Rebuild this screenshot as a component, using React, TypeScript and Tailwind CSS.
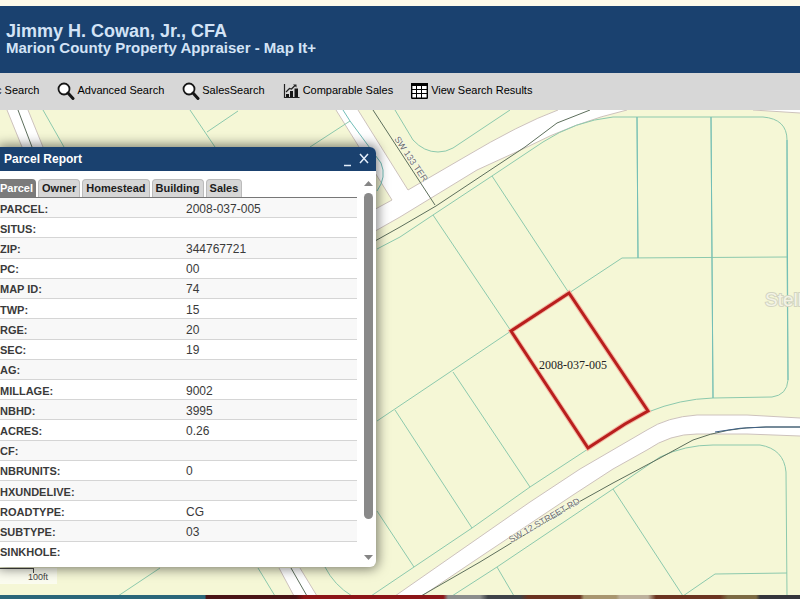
import React from "react";

const rows: [string, string][] = [
  ["PARCEL:", "2008-037-005"],
  ["SITUS:", ""],
  ["ZIP:", "344767721"],
  ["PC:", "00"],
  ["MAP ID:", "74"],
  ["TWP:", "15"],
  ["RGE:", "20"],
  ["SEC:", "19"],
  ["AG:", ""],
  ["MILLAGE:", "9002"],
  ["NBHD:", "3995"],
  ["ACRES:", "0.26"],
  ["CF:", ""],
  ["NBRUNITS:", "0"],
  ["HXUNDELIVE:", ""],
  ["ROADTYPE:", "CG"],
  ["SUBTYPE:", "03"],
  ["SINKHOLE:", ""],
];

const tabs = ["Parcel", "Owner", "Homestead", "Building", "Sales"];

function SearchIcon() {
  return (
    <svg viewBox="0 0 18 18" className="size-[18px] shrink-0" aria-hidden="true">
      <circle cx="7" cy="7" r="5.500" fill="#fff" stroke="#161616" strokeWidth="1.800" />
      <path d="M11 11l5 5.500" stroke="#161616" strokeWidth="3" strokeLinecap="round" />
    </svg>
  );
}

function ChartIcon() {
  return (
    <svg viewBox="0 0 17 16" className="h-4 w-[17px] shrink-0" aria-hidden="true">
      <path d="M1.500 1v13.500H16.500" fill="none" stroke="#222" strokeWidth="1.200" />
      <path d="M3 11h3v3H3zM7 8h3v6H7zM11.500 5.500h3.500v8.500h-3.500z" fill="#161616" />
      <path d="M3 9l3.500-3.500 2 .5 3.500-3.500" fill="none" stroke="#222" strokeWidth="1.200" />
      <path d="M10 1.500h3.500v3z" fill="#222" />
    </svg>
  );
}

function GridIcon() {
  return (
    <svg viewBox="0 0 17 16" className="h-4 w-[17px] shrink-0" aria-hidden="true">
      <rect x="0.700" y="0.700" width="15.600" height="14.600" rx="0.500" fill="#fff" stroke="#000" strokeWidth="1.400" />
      <path d="M0 0h17v3H0z" fill="#000" />
      <path d="M1 6.500h15M1 10.500h15M5.500 3v12M10.500 3v12" stroke="#000" strokeWidth="1" />
    </svg>
  );
}

function ParcelMap() {
  return (
    <svg
      viewBox="0 110 800 485"
      preserveAspectRatio="xMinYMin slice"
      className="absolute inset-0 h-full w-full bg-[#f5f7d6]"
      role="img"
      aria-label="Parcel map"
    >
      <g fill="#fff">
        <path d="M336 110L392 200L370 212V234L400 217L477 170L525 148Q575 122 627 110H558Q520 124 463 158L408 190L358 110Z" />
        <path d="M7 110L22 147H43L28 110Z" />
        <path d="M279 568L294 596H317L300 568Z" />
        <path d="M753 110L800 113V110Z" />
        <path d="M395 596L530 502L580 469L647 430Q667 417 697 415H747L800 418V436L747 434H697Q670 434 647 450L613 469L573 495L480 557L422 596Z" />
      </g>
      <g fill="none" stroke="#cdc2bd" strokeWidth="1">
        <path d="M336 110L392 200L370 212M370 234L400 217L477 170L525 148Q575 122 627 110M558 110Q520 124 463 158L408 190L358 110" />
        <path d="M7 110L22 147M28 110L43 147M279 568L294 596M300 568L317 596M753 110L800 113" />
        <path d="M395 596L530 502L580 469L647 430Q667 417 697 415H747L800 418M800 436L747 434H697Q670 434 647 450L613 469L573 495L480 557L422 596" />
      </g>
      <g fill="none" stroke="#8cc9ad" strokeWidth="1">
        <path d="M377 249L400 237L433 215L492 176L543 142Q575 121 613 117H763Q787 119 787 140V257L788 380Q787 395 772 397L713 398Q680 399 648 412" />
        <path d="M395 110L413 140Q424 152 438 152Q446 152 453 148L480 130L510 110" />
        <path d="M190 110L215 147M207 132L238 111M350 121L310 147M43 110L64 147" />
        <path d="M492 176L569 293L622 258L787 257M433 215L511 331L377 421" />
        <path d="M637 117L638 258M711 117L713 398" />
        <path d="M453 372L530 487M395 410L472 528M377 511L414 567M588 449L530 487L472 528L414 567L371 596" />
        <path d="M660 457Q685 445 713 445H760Q784 449 786 472L787 596M660 457L613 489L497 567L452 596M613 489L683 596L715 574L787 573M497 567L514 596" />
        <path d="M118 596L160 568M258 568L275 596M325 567Q334 585 352 596" />
      </g>
      <path d="M637 117L638 258M711 117L713 398M787 140L788 380M343 110L350 121L381 163Q387 177 377 191" fill="none" stroke="#72beb8" />
      <g fill="none" stroke="#5d6f5c" strokeWidth="1">
        <path d="M590 110L557 123L525 147L436 206L400 227L375 241M373 110L435 205M18 110L32 147M291 568L307 596" />
        <path d="M800 427L766 427Q727 427 693 440L660 458L613 483L577 503L480 562L421 596" />
      </g>
      <path d="M800 427L766 427Q740 427 715 432" fill="none" stroke="#3e5f86" />
      <path d="M569 293L648 411L625 424L588 448L511 331Z" fill="none" stroke="#f3b9a4" strokeWidth="5" />
      <path d="M569 293L648 411L625 424L588 448L511 331Z" fill="none" stroke="#b91f1d" strokeWidth="3" />
      <text x="539" y="369" className="font-['Liberation_Serif',serif] text-[12px]" fill="#222">2008-037-005</text>
      <g className="font-['Liberation_Sans',Arial,sans-serif] text-[9px]" fill="#6d6d6d" stroke="#fbfcf0" strokeWidth="1" paintOrder="stroke">
        <text transform="translate(394 139) rotate(56)">SW 133 TER</text>
        <text transform="translate(511 543) rotate(-30)">SW 12 STREET RD</text>
      </g>
      <text x="765" y="306" className="font-['Liberation_Sans',Arial,sans-serif] text-[19px]" fill="#f3f3e6" stroke="#d2d4c0" strokeWidth="2" paintOrder="stroke">Stell</text>
    </svg>
  );
}

function ParcelReport() {
  return (
    <section className="absolute top-[37px] left-0 flex w-[376px] flex-col overflow-hidden rounded-r-md bg-white shadow-[0_0_12px_2px_rgba(0,0,0,0.5)]">
      <header className="flex h-6 items-center bg-[#1a416f] pr-[7px] pl-1 text-white">
        <h2 className="flex-1 text-[12px] font-bold">Parcel Report</h2>
        <button type="button" aria-label="Minimize" className="flex h-6 w-4 items-center">
          <svg viewBox="0 0 16 24" className="h-6 w-4" aria-hidden="true">
            <path d="M1 18.500h7" stroke="#e4eefa" strokeWidth="1.500" />
          </svg>
        </button>
        <button type="button" aria-label="Close" className="flex h-6 w-[10px] items-center">
          <svg viewBox="0 0 10 24" className="h-6 w-[10px]" aria-hidden="true">
            <path d="M1 7l8 9M9 7l-8 9" stroke="#e4eefa" strokeWidth="1.500" />
          </svg>
        </button>
      </header>
      <div className="flex h-[396px] justify-between pt-2">
        <div className="w-[357px]">
          <div role="tablist" className="flex h-[19px] gap-[2px] border-b border-[#777]">
            {tabs.map((tab, i) => (
              <button
                key={tab}
                type="button"
                role="tab"
                aria-selected={i === 0}
                className={
                  i === 0
                    ? "rounded-tr-sm bg-[#7b7b7b] pr-[3px] text-[11px] font-bold text-white"
                    : "rounded-t-sm border border-b-0 border-[#bbb] bg-[#d6d6d6] px-[3px] text-[11px] font-bold text-[#1c1c1c]"
                }
              >
                {tab}
              </button>
            ))}
          </div>
          <table className="h-[363px] w-full border-collapse text-[#3a3a3a]">
            <tbody>
              {rows.map(([label, value]) => (
                <tr key={label} className="border-b border-[#d5d5d5] odd:bg-[#f8f8f8] last:border-0">
                  <th scope="row" className="w-[186px] p-0 pt-[2px] text-left text-[11px] leading-4 font-bold">{label}</th>
                  <td className="p-0 pt-[2px] text-[12px] leading-4">{value}</td>
                </tr>
              ))}
            </tbody>
          </table>
        </div>
        <div className="mr-[3px] flex w-[9px] flex-col items-center pt-[2px] pb-[7px]" aria-hidden="true">
          <svg viewBox="0 0 9 5" className="h-[5px] w-[9px]"><path d="M0 5L4.500 0L9 5z" fill="#858585" /></svg>
          <div className="mt-[7px] h-[326px] w-[9px] rounded-full bg-[#898989]" />
          <svg viewBox="0 0 9 5" className="mt-auto h-[5px] w-[9px]"><path d="M0 0L4.500 5L9 0z" fill="#858585" /></svg>
        </div>
      </div>
    </section>
  );
}

export default function App() {
  return (
    <div className="flex h-screen min-h-[599px] flex-col overflow-hidden bg-[#fdf9ea] pt-[6px] font-['Liberation_Sans',Arial,sans-serif]">
      <header className="flex h-[67px] shrink-0 flex-col justify-center bg-[#1a416f] pb-[2px] pl-[6px] font-bold text-[#d3e3f6]">
        <h1 className="text-[18px] leading-[18px]">Jimmy H. Cowan, Jr., CFA</h1>
        <p className="text-[15px] leading-4">Marion County Property Appraiser - Map It+</p>
      </header>
      <nav className="flex h-[37px] shrink-0 items-center gap-[18px] bg-[#d7d7d7] pb-[2px] text-[11px] whitespace-nowrap text-black">
        <button type="button" className="-ml-1">c Search</button>
        <button type="button" className="flex items-center gap-[2px]"><SearchIcon />Advanced Search</button>
        <button type="button" className="flex items-center gap-[2px]"><SearchIcon />SalesSearch</button>
        <button type="button" className="flex items-center gap-[3px]"><ChartIcon />Comparable Sales</button>
        <button type="button" className="flex items-center gap-[3px]"><GridIcon />View Search Results</button>
      </nav>
      <main className="relative flex-1 overflow-hidden">
        <ParcelMap />
        <div className="absolute bottom-[11px] left-0 flex h-4 w-[57px] flex-col bg-white/60 text-[9px] text-[#444]">
          <div className="h-[5px] w-[34px] shrink-0 border-t border-r border-[#444]" />
          <span className="pl-7 leading-[9px]">100ft</span>
        </div>
        <ParcelReport />
      </main>
      <div className="h-1 shrink-0 bg-[linear-gradient(90deg,#2a6679_0_25.6%,#4a1416_25.8%_37%,#8c1517_38%_55.400%,#8b8d8c_56%_60%,#3f4348_61%_65%,#6a3320_66%_72.500%,#a8966f_73%_77%,#bdb19c_77.500%_81%,#6b3420_82%_90%,#7c6a43_91%_94.500%,#34353b_95%)]" />
    </div>
  );
}
